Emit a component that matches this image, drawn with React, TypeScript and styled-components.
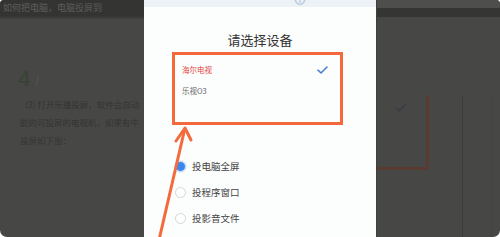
import React from "react";
import styled, { createGlobalStyle } from "styled-components";

const GlobalStyle = createGlobalStyle`
  html, body {
    margin: 0;
    padding: 0;
    background: #ffffff;
  }
`;

const devices = [
  { name: "海尔电视", active: true },
  { name: "乐视O3", active: false },
];

const modes = [
  { label: "投电脑全屏", checked: true },
  { label: "投程序窗口", checked: false },
  { label: "投影音文件", checked: false },
];

const App = () => {
  return (
    <>
      <GlobalStyle />
      <Frame>
        <LeftPane>
          <PageHeader>
            <HeaderText>如何把电脑，电脑投屏到</HeaderText>
          </PageHeader>
          <PageBody>
            <StepNo>
              4<Slash>/</Slash>
            </StepNo>
            <Para indent>(3) 打开乐播投屏，软件会自动</Para>
            <Para>能的可投屏的电视机，如果有中</Para>
            <Para>投屏如下图：</Para>
          </PageBody>
        </LeftPane>

        <Modal>
          <ModalStrip>
            <svg width="14" height="7" viewBox="0 0 14 7">
              <path d="M2 0 Q7 9 12 0" fill="none" stroke="#bcd0e2" strokeWidth="1.6" />
              <rect x="6" y="0" width="2" height="3" fill="#c9d9e8" />
            </svg>
          </ModalStrip>
          <Title>请选择设备</Title>
          <DeviceBox>
            {devices.map((d) => (
              <DeviceRow key={d.name} $active={d.active}>
                <span>{d.name}</span>
                {d.active && (
                  <svg width="11" height="8" viewBox="0 0 11 8">
                    <path
                      d="M1 4.2 L4 7 L10 1"
                      fill="none"
                      stroke="#4b7fd3"
                      strokeWidth="1.6"
                      strokeLinecap="round"
                      strokeLinejoin="round"
                    />
                  </svg>
                )}
              </DeviceRow>
            ))}
          </DeviceBox>
          <RadioList>
            {modes.map((m) => (
              <RadioRow key={m.label}>
                <RadioDot $checked={m.checked} />
                <RadioLabel>{m.label}</RadioLabel>
              </RadioRow>
            ))}
          </RadioList>
        </Modal>

        <RightPane>
          <RightTop />
          <RightBar />
          <RightBody>
            <FadedBox>
              <svg width="11" height="8" viewBox="0 0 11 8">
                <path
                  d="M1 4.2 L4 7 L10 1"
                  fill="none"
                  stroke="#3a3c47"
                  strokeWidth="1.6"
                  strokeLinecap="round"
                  strokeLinejoin="round"
                />
              </svg>
            </FadedBox>
            <FadedColumn />
            <FadedColumn $narrow />
          </RightBody>
        </RightPane>

        <Arrow width="500" height="237" viewBox="0 0 500 237">
          <line x1="159" y1="240" x2="184.5" y2="130" stroke="#f36b3c" strokeWidth="3" />
          <polyline
            points="176,141 185,128 191,140"
            fill="none"
            stroke="#f36b3c"
            strokeWidth="3"
            strokeLinecap="round"
            strokeLinejoin="round"
          />
        </Arrow>
      </Frame>
    </>
  );
};

const Frame = styled.div`
  position: relative;
  width: 500px;
  height: 237px;
  display: flex;
  overflow: hidden;
  border-radius: 4px 4px 7px 7px;
  background: #474745;
  font-family: "Noto Sans CJK SC", "Noto Sans", sans-serif;
`;

const LeftPane = styled.div`
  width: 144px;
  display: flex;
  flex-direction: column;
`;

const PageHeader = styled.div`
  box-sizing: border-box;
  height: 19px;
  padding-top: 3px;
  background: #343433;
  border-bottom: 2px solid #3e3e3c;
`;

const HeaderText = styled.div`
  padding-left: 3px;
  font-size: 9px;
  line-height: 10px;
  color: #5e5e5c;
  white-space: nowrap;
`;

const PageBody = styled.div`
  padding: 49px 0 0 18px;
  display: flex;
  flex-direction: column;
`;

const StepNo = styled.div`
  height: 27px;
  font-size: 22px;
  line-height: 22px;
  color: #354335;
  font-family: "Liberation Sans", sans-serif;
`;

const Slash = styled.span`
  margin-left: 5px;
  font-size: 14px;
  color: #50524f;
`;

const Para = styled.div<{ indent?: boolean }>`
  height: 18px;
  padding-left: ${(p) => (p.indent ? "7px" : "2px")};
  font-size: 8.5px;
  line-height: 18px;
  color: #353533;
  white-space: nowrap;
`;

const Modal = styled.div`
  width: 232px;
  background: #fcfdfd;
  display: flex;
  flex-direction: column;
`;

const ModalStrip = styled.div`
  height: 7px;
  background: #edf2f6;
  display: flex;
  justify-content: center;
  padding-left: 80px;
`;

const Title = styled.div`
  margin-top: 25px;
  text-align: center;
  font-size: 13px;
  line-height: 16px;
  color: #333333;
`;

const DeviceBox = styled.div`
  box-sizing: border-box;
  margin: 4px 0 0 28px;
  width: 171px;
  height: 73px;
  border: 3px solid #f3693b;
  padding: 4px 12px 0 7px;
  display: flex;
  flex-direction: column;
`;

const DeviceRow = styled.div<{ $active: boolean }>`
  height: 21px;
  display: flex;
  align-items: center;
  justify-content: space-between;
  font-size: 7.5px;
  color: ${(p) => (p.$active ? "#e0443d" : "#666666")};
`;

const RadioList = styled.div`
  margin-top: 28px;
  padding-left: 31px;
  display: flex;
  flex-direction: column;
`;

const RadioRow = styled.div`
  height: 26px;
  display: flex;
  align-items: center;
  gap: 6px;
`;

const RadioDot = styled.span<{ $checked: boolean }>`
  box-sizing: border-box;
  width: 11px;
  height: 11px;
  border-radius: 50%;
  background: ${(p) => (p.$checked ? "#3e86ef" : "#ffffff")};
  border: 1px solid ${(p) => (p.$checked ? "#cfe0fa" : "#d6d6d6")};
  box-shadow: ${(p) => (p.$checked ? "0 0 0 1px #e3edfc" : "none")};
`;

const RadioLabel = styled.span`
  font-size: 9.5px;
  color: #444444;
`;

const RightPane = styled.div`
  flex: 1;
  display: flex;
  flex-direction: column;
  border-left: 1px solid #3f3f3d;
`;

const RightTop = styled.div`
  height: 8px;
  background: #4e4e4c;
`;

const RightBar = styled.div`
  height: 9px;
  background: #353534;
`;

const RightBody = styled.div`
  flex: 1;
  display: flex;
  padding-top: 78px;
`;

const FadedBox = styled.div`
  box-sizing: border-box;
  width: 52px;
  height: 75px;
  border-right: 3px solid #5a3a31;
  border-bottom: 3px solid #5a3a31;
  display: flex;
  justify-content: flex-end;
  padding: 9px 20px 0 0;
`;

const FadedColumn = styled.div<{ $narrow?: boolean }>`
  width: ${(p) => (p.$narrow ? "0" : "33px")};
  border-right: 1px solid ${(p) => (p.$narrow ? "#434341" : "#3c3c3a")};
  margin-left: ${(p) => (p.$narrow ? "28px" : "0")};
`;

const Arrow = styled.svg`
  position: absolute;
  left: 0;
  top: 0;
  pointer-events: none;
`;

export default App;
